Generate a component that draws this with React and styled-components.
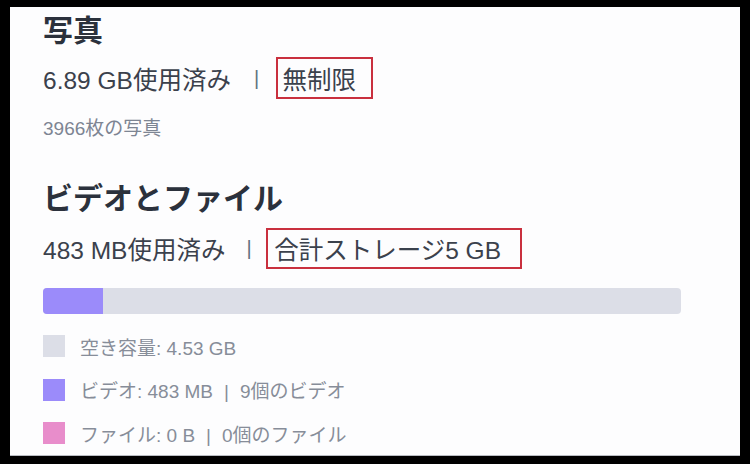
import React from "react";
import styled, { createGlobalStyle } from "styled-components";

const GlobalStyle = createGlobalStyle`
  html, body {
    margin: 0;
    padding: 0;
    background: #000;
  }
  body {
    font-family: "Liberation Sans", "Noto Sans CJK JP", sans-serif;
  }
`;

const Frame = styled.div`
  width: 750px;
  height: 464px;
  padding: 7px 10px 8px 10px;
  box-sizing: border-box;
  background: #000;
`;

const Panel = styled.div`
  height: 449px;
  background: #fdfdfe;
  padding: 6px 33px 0 33px;
  box-sizing: border-box;
  overflow: hidden;
  display: flex;
  flex-direction: column;
  border-bottom: 1px solid #b9bcc2;
`;

const Heading = styled.h2`
  margin: ${(p) => p.mt || 0}px 0 0 0;
  font-size: 30px;
  line-height: 36px;
  font-weight: 700;
  color: #2b313c;
`;

const UsageRow = styled.div`
  display: flex;
  align-items: center;
  margin-top: ${(p) => p.mt || 0}px;
  font-size: 24.5px;
  color: #3b414c;
  height: 42px;
`;

const Sep = styled.span`
  color: #5f7380;
  font-size: 20px;
  margin: 0 ${(p) => p.right}px 0 ${(p) => p.left}px;
`;

const Highlight = styled.span`
  display: inline-flex;
  align-items: center;
  height: ${(p) => p.h}px;
  box-sizing: border-box;
  border: 2.5px solid #c9303e;
  padding: 0 ${(p) => p.pr}px 0 ${(p) => p.pl}px;
  color: #3b414c;
`;

const SubText = styled.div`
  margin-top: ${(p) => p.mt || 0}px;
  font-size: 19px;
  line-height: 24px;
  color: #7d8593;
`;

const Bar = styled.div`
  margin-top: 19px;
  width: 638px;
  height: 26px;
  border-radius: 4px;
  background: #dcdee7;
  overflow: hidden;
  display: flex;
  flex: none;
`;

const Segment = styled.div`
  height: 100%;
  background: ${(p) => p.color};
`;

const Legend = styled.div`
  display: flex;
  flex-direction: column;
  gap: 21.5px;
  margin-top: 21px;
`;

const LegendRow = styled.div`
  display: flex;
  align-items: center;
  height: 22px;
`;

const Swatch = styled.span`
  width: 22px;
  height: 22px;
  background: ${(p) => p.color};
  flex: none;
`;

const LegendText = styled.span`
  margin-left: 15px;
  font-size: 19px;
  color: #878d99;
`;

const Pipe = styled.span`
  margin: 0 11px;
`;

export default function App() {
  return (
    <>
      <GlobalStyle />
      <Frame>
        <Panel>
          <Heading>写真</Heading>
          <UsageRow mt={8}>
            <span>6.89 GB使用済み</span>
            <Sep left={23} right={17}>|</Sep>
            <Highlight h={42} pl={4.5} pr={15}>
              無制限
            </Highlight>
          </UsageRow>
          <SubText mt={18}>3966枚の写真</SubText>
          <Heading mt={40}>ビデオとファイル</Heading>
          <UsageRow mt={10}>
            <span>483 MB使用済み</span>
            <Sep left={21} right={14}>|</Sep>
            <Highlight h={41} pl={6.5} pr={19}>
              合計ストレージ5 GB
            </Highlight>
          </UsageRow>
          <Bar>
            <Segment color="#9b8bfa" style={{ width: "60px" }} />
          </Bar>
          <Legend>
            <LegendRow>
              <Swatch color="#dcdee7" />
              <LegendText>空き容量: 4.53 GB</LegendText>
            </LegendRow>
            <LegendRow>
              <Swatch color="#9b8bfa" />
              <LegendText>
                ビデオ: 483 MB<Pipe>|</Pipe>9個のビデオ
              </LegendText>
            </LegendRow>
            <LegendRow>
              <Swatch color="#e88dcb" />
              <LegendText>
                ファイル: 0 B<Pipe>|</Pipe>0個のファイル
              </LegendText>
            </LegendRow>
          </Legend>
        </Panel>
      </Frame>
    </>
  );
}
